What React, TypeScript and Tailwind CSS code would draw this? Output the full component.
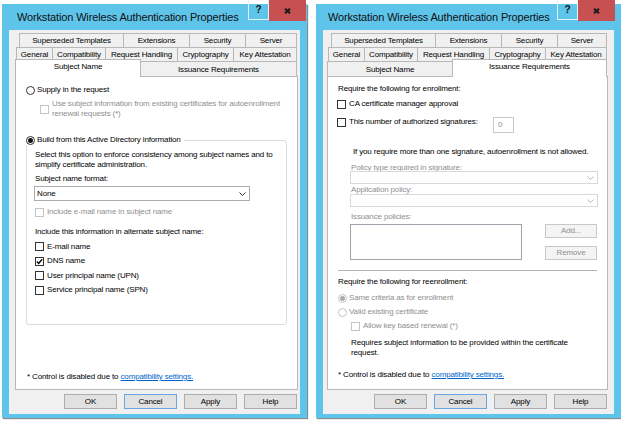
import React from "react";

const FONT = "font-['Liberation_Sans',Arial,sans-serif]";
const DIS = "text-[#8f8f8f]";

function CheckBox({ checked = false, disabled = false }: { checked?: boolean; disabled?: boolean }) {
  return (
    <span
      className={`relative block w-[9px] h-[9px] shrink-0 border bg-white ${
        disabled ? "border-[#c4c4c4]" : "border-[#333333]"
      }`}
    >
      {checked && (
        <svg className="absolute left-0 top-0" width="7" height="7" viewBox="0 0 7 7">
          <path d="M0.9 3.5 L2.7 5.4 L6.2 1.1" fill="none" stroke="#000" strokeWidth="1.4" />
        </svg>
      )}
    </span>
  );
}

function Radio({ checked = false, disabled = false }: { checked?: boolean; disabled?: boolean }) {
  return (
    <span
      className={`flex items-center justify-center w-[9px] h-[9px] shrink-0 rounded-full border bg-white ${
        disabled ? "border-[#c4c4c4]" : "border-[#333333]"
      }`}
    >
      {checked && (
        <span className={`block w-[5px] h-[5px] rounded-full ${disabled ? "bg-[#a9a9a9]" : "bg-[#111111]"}`} />
      )}
    </span>
  );
}

function Chevron({ color }: { color: string }) {
  return (
    <svg width="7" height="4" viewBox="0 0 7 4" className="shrink-0">
      <path d="M0.5 0.5 L3.5 3.5 L6.5 0.5" fill="none" stroke={color} strokeWidth="1" />
    </svg>
  );
}

function Tab({ label, w, sel = false, first = false, row3 = false }: { label: string; w?: string; sel?: boolean; first?: boolean; row3?: boolean }) {
  const width = w ?? "flex-1";
  if (row3) {
    return (
      <div
        className={`${width} ${first ? "" : "-ml-px"} flex justify-center border-l border-t border-r border-[#b8b8b8] ${
          sel ? "relative z-10 h-[18px] -mb-px bg-white pt-[2px]" : "h-[15px] bg-[#f0f0f0] pt-[3px]"
        }`}
      >
        <span className="whitespace-nowrap leading-[10px]">{label}</span>
      </div>
    );
  }
  return (
    <div
      className={`${width} ${first ? "" : "-ml-px"} h-full flex items-center justify-center border border-[#b8b8b8] bg-[#f0f0f0]`}
    >
      <span className="whitespace-nowrap leading-[10px]">{label}</span>
    </div>
  );
}

function Button({ label, focus = false }: { label: string; focus?: boolean }) {
  return (
    <div
      className={`w-[53px] h-[15px] flex items-center justify-center border bg-[#e1e1e1] ${
        focus ? "border-[#6aa6e0]" : "border-[#adadad]"
      }`}
    >
      {label}
    </div>
  );
}

function Win({ variant, children }: { variant: "left" | "right"; children: React.ReactNode }) {
  const left = variant === "left";
  const sel = left ? "subject" : "issuance";
  return (
    <div className="relative flex flex-col w-[305px] h-[414px] shrink-0 bg-[#5fc4ea] shadow-[1px_1px_1px_rgba(0,0,0,0.45)]">
      <div
        className={`h-[26px] flex items-center text-[11px] tracking-[-0.15px] text-[#111111] whitespace-nowrap ${
          left ? "pl-[15px]" : "pl-[12px]"
        }`}
      >
        Workstation Wireless Authentication Properties
      </div>
      <div className={`absolute -top-[4px] flex items-start ${left ? "right-[1px]" : "right-[6px]"}`}>
        <div className="w-[21px] h-[20px] border border-t-0 border-[#e2f4fb] flex items-center justify-center text-[10px] font-bold text-[#111111]">
          ?
        </div>
        <div className="w-[37px] h-[21px] bg-[#c75050] flex items-center justify-center">
          <svg width="7" height="6" viewBox="0 0 7 6">
            <path d="M1 0.7 L6 5.3 M6 0.7 L1 5.3" stroke="#1a1a1a" strokeWidth="2" />
          </svg>
        </div>
      </div>
      <div
        className={`flex-1 mx-[7px] mb-[4px] bg-[#f0f0f0] flex flex-col pt-[3px] ${
          left ? "pl-[6px] pr-[2px]" : "pl-[4px] pr-[6px]"
        }`}
      >
        <div className="flex h-[15px] ml-[4px] mr-[1px]">
          <Tab label="Superseded Templates" w="w-[105px]" first />
          <Tab label="Extensions" w="w-[67px]" />
          <Tab label="Security" w="w-[57px]" />
          <Tab label="Server" />
        </div>
        <div className="flex h-[15px] -mt-px ml-[1px] mr-[1px]">
          <Tab label="General" w="w-[37px]" first />
          <Tab label="Compatibility" w="w-[54px]" />
          <Tab label="Request Handling" w="w-[73px]" />
          <Tab label="Cryptography" w="w-[57px]" />
          <Tab label="Key Attestation" />
        </div>
        <div className="flex items-end h-[15px] -mt-px mr-[1px]">
          <Tab label="Subject Name" w="w-[126px]" first row3 sel={sel === "subject"} />
          <Tab label="Issuance Requirements" row3 sel={sel === "issuance"} />
        </div>
        <div className="h-[314px] bg-white border border-[#b8b8b8]">{children}</div>
        <div className="mt-[4px] mr-[1px] flex justify-end gap-[7px]">
          <Button label="OK" />
          <Button label="Cancel" focus />
          <Button label="Apply" />
          <Button label="Help" />
        </div>
      </div>
    </div>
  );
}

function CheckRow({ label, checked = false, disabled = false, cls = "" }: { label: string; checked?: boolean; disabled?: boolean; cls?: string }) {
  return (
    <div className={`flex items-center gap-[3px] h-[10px] ${cls}`}>
      <CheckBox checked={checked} disabled={disabled} />
      <span className={`whitespace-nowrap ${disabled ? DIS : ""}`}>{label}</span>
    </div>
  );
}

function RadioRow({ label, checked = false, disabled = false, cls = "" }: { label: string; checked?: boolean; disabled?: boolean; cls?: string }) {
  return (
    <div className={`flex items-center gap-[2px] h-[10px] ${cls}`}>
      <Radio checked={checked} disabled={disabled} />
      <span className={`whitespace-nowrap ${disabled ? DIS : ""}`}>{label}</span>
    </div>
  );
}

function Footer({ cls }: { cls: string }) {
  return (
    <div className={`mt-auto whitespace-nowrap ${cls}`}>
      * Control is disabled due to <span className="text-[#0066cc] underline">compatibility settings.</span>
    </div>
  );
}

function SubjectPanel() {
  return (
    <div className="flex flex-col h-full pl-[10px] pt-[8px]">
      <RadioRow label="Supply in the request" />
      <div className="mt-[4px] ml-[14px] flex items-center gap-[3px]">
        <CheckBox disabled />
        <span className={`whitespace-nowrap ${DIS}`}>
          Use subject information from existing certificates for autoenrollment
          <br />
          renewal requests (*)
        </span>
      </div>
      <div className="relative z-10 mt-[16px] w-fit bg-white pr-[3px]">
        <RadioRow label="Build from this Active Directory information" checked />
      </div>
      <div className="-mt-[5px] w-[261px] h-[185px] border border-[#dcdcdc] rounded-[3px] pl-[8px] pt-[9px] flex flex-col">
        <div className="whitespace-nowrap">
          Select this option to enforce consistency among subject names and to
          <br />
          simplify certificate administration.
        </div>
        <div className="mt-[4px]">Subject name format:</div>
        <div className="mt-[2px] -ml-px w-[216px] h-[15px] border border-[#acacac] bg-white flex items-center justify-between pl-[2px] pr-[3px]">
          <span>None</span>
          <Chevron color="#333333" />
        </div>
        <CheckRow label="Include e-mail name in subject name" disabled cls="mt-[6px]" />
        <div className="mt-[10px] whitespace-nowrap">Include this information in alternate subject name:</div>
        <CheckRow label="E-mail name" cls="mt-[4.5px]" />
        <CheckRow label="DNS name" checked cls="mt-[4.5px]" />
        <CheckRow label="User principal name (UPN)" cls="mt-[4.5px]" />
        <CheckRow label="Service principal name (SPN)" cls="mt-[4.5px]" />
      </div>
      <Footer cls="mb-[7px] ml-px" />
    </div>
  );
}

function DisabledSelect({ cls }: { cls: string }) {
  return (
    <div className={`ml-[12px] w-[248px] h-[13px] border border-[#d9d9d9] bg-white flex items-center justify-end pr-[3px] ${cls}`}>
      <Chevron color="#b5b5b5" />
    </div>
  );
}

function SmallButton({ label }: { label: string }) {
  return (
    <div className={`w-[52px] h-[14px] border border-[#c8c8c8] bg-[#f4f4f4] flex items-center justify-center ${DIS}`}>
      {label}
    </div>
  );
}

function IssuancePanel() {
  return (
    <div className="flex flex-col h-full pl-[10px] pt-[7px]">
      <div className="whitespace-nowrap">Require the following for enrollment:</div>
      <CheckRow label="CA certificate manager approval" cls="mt-[5px] -ml-px" />
      <div className="mt-[8px] -ml-px flex items-start">
        <div className="flex items-center gap-[3px] h-[10px] w-[156px]">
          <CheckBox />
          <span className="whitespace-nowrap">This number of authorized signatures:</span>
        </div>
        <div className={`w-[21px] h-[16px] border border-[#c8c8c8] bg-white pl-[4px] flex items-center ${DIS}`}>0</div>
      </div>
      <div className="mt-[14px] ml-[15px] whitespace-nowrap">
        If you require more than one signature, autoenrollment is not allowed.
      </div>
      <div className={`mt-[6px] ml-[13px] whitespace-nowrap ${DIS}`}>Policy type required in signature:</div>
      <DisabledSelect cls="-mt-[2px]" />
      <div className={`mt-[1px] ml-[13px] whitespace-nowrap ${DIS}`}>Application policy:</div>
      <DisabledSelect cls="-mt-[1px]" />
      <div className={`mt-[5px] ml-[13px] whitespace-nowrap ${DIS}`}>Issuance policies:</div>
      <div className="mt-[2px] ml-[12px] flex items-start">
        <div className="w-[172px] h-[36px] border border-[#9ea3ad] bg-white" />
        <div className="ml-[23px] h-[36px] flex flex-col justify-between">
          <SmallButton label="Add..." />
          <SmallButton label="Remove" />
        </div>
      </div>
      <div className="mt-[10px] w-[259px] h-px bg-[#b4b4b4]" />
      <div className="mt-[6px] whitespace-nowrap">Require the following for reenrollment:</div>
      <RadioRow label="Same criteria as for enrollment" checked disabled cls="mt-[6px]" />
      <RadioRow label="Valid existing certificate" disabled cls="mt-[4px]" />
      <CheckRow label="Allow key based renewal (*)" disabled cls="mt-[4px] ml-[13px]" />
      <div className="mt-[7px] ml-[13px] whitespace-nowrap">
        Requires subject information to be provided within the certificate
        <br />
        request.
      </div>
      <Footer cls="mb-[9px]" />
    </div>
  );
}

export default function App() {
  return (
    <div
      className={`w-[621px] h-[422px] bg-white flex items-start pt-[4px] pl-[2px] gap-[9px] overflow-hidden text-[8px] tracking-[-0.15px] leading-[10px] text-black ${FONT}`}
    >
      <Win variant="left">
        <SubjectPanel />
      </Win>
      <Win variant="right">
        <IssuancePanel />
      </Win>
    </div>
  );
}
